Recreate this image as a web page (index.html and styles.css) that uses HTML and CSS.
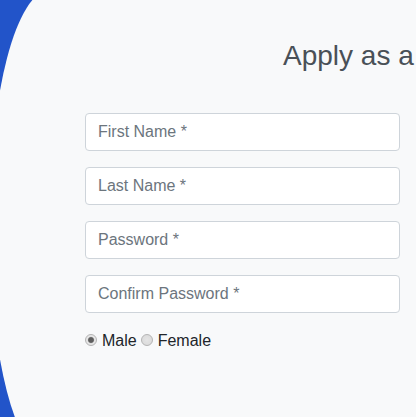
FILE: index.html
```html
<!DOCTYPE html>
<html>
<head>
<meta charset="utf-8">
<link rel="stylesheet" href="styles.css">
</head>
<body>
<div class="register">
  <div class="panel">
    <h3 class="heading">Apply as a Employee</h3>
    <form class="form">
      <div class="group"><input class="field" type="text" placeholder="First Name *"></div>
      <div class="group"><input class="field" type="text" placeholder="Last Name *"></div>
      <div class="group"><input class="field" type="password" placeholder="Password *"></div>
      <div class="group"><input class="field" type="password" placeholder="Confirm Password *"></div>
      <div class="radios">
        <label class="opt"><input class="radio" type="radio" name="gender" checked><span>Male</span></label>
        <label class="opt"><input class="radio" type="radio" name="gender"><span>Female</span></label>
      </div>
    </form>
  </div>
</div>
</body>
</html>
```
FILE: styles.css
```css
html, body {
  margin: 0;
  padding: 0;
  width: 416px;
  height: 417px;
  overflow: hidden;
}
body {
  background: #2254c9;
  font-family: "Liberation Sans", Arial, sans-serif;
}
.register {
  width: 416px;
  height: 417px;
  overflow: hidden;
}
.panel {
  box-sizing: border-box;
  margin: -10px 0 0 -11px;
  width: 610px;
  height: 470px;
  background: #f8f9fa;
  border-radius: 61px 0 0 61px / 235px 0 0 235px;
  padding: 49px 0 0 96px;
}
.heading {
  margin: 0 0 40px 198px;
  font-size: 28px;
  font-weight: 400;
  line-height: 1.2;
  color: #495057;
  white-space: nowrap;
}
.form {
  width: 315px;
}
.group {
  margin-bottom: 16px;
}
.field {
  box-sizing: border-box;
  display: block;
  width: 315px;
  height: 38px;
  padding: 6px 12px;
  font-family: "Liberation Sans", Arial, sans-serif;
  font-size: 16px;
  line-height: 1.5;
  color: #495057;
  background: #fff;
  border: 1px solid #ced4da;
  border-radius: 4px;
  outline: none;
}
.field::placeholder {
  color: #6c757d;
  opacity: 1;
}
.radios {
  display: flex;
  align-items: center;
  font-size: 16px;
  line-height: 24px;
  color: #212529;
}
.opt {
  display: flex;
  align-items: center;
  margin-right: 4px;
}
.radio {
  appearance: none;
  -webkit-appearance: none;
  box-sizing: border-box;
  width: 12px;
  height: 12px;
  margin: -1px 5px 0 0;
  border: 1px solid #b4b4b4;
  border-radius: 50%;
  background: radial-gradient(circle, #e4e4e4 0, #d8d8d8 100%);
}
.radio:checked {
  background: radial-gradient(circle, #5e5e5e 0 2.4px, #e6e6e6 3.6px);
}
```
